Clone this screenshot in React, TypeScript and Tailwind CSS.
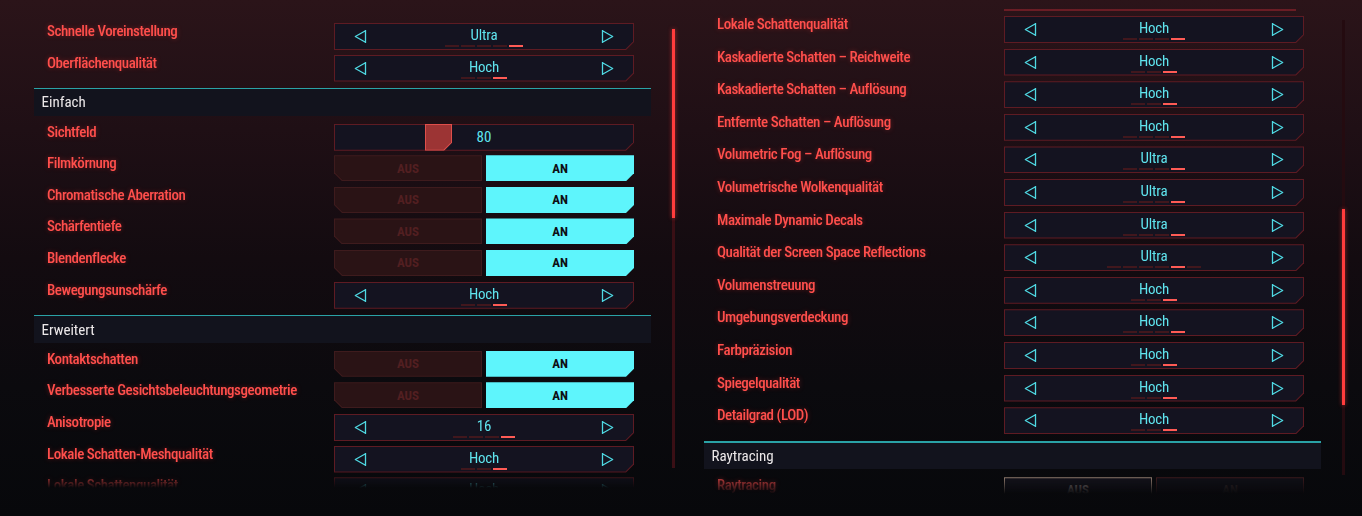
import React from "react";

/* ──────── Types ──────── */
type Control =
  | { kind: "select"; value: string; steps: number; active: number }
  | { kind: "toggle"; on: boolean; disabled?: boolean }
  | { kind: "slider"; value: number; min: number; max: number };

type Item =
  | { type: "row"; label: string; control: Control; dim?: boolean }
  | { type: "header"; title: string };

const sel = (value: string, steps: number, active = steps - 1): Control => ({
  kind: "select",
  value,
  steps,
  active,
});
const AN: Control = { kind: "toggle", on: true };

const leftItems: Item[] = [
  { type: "row", label: "Schnelle Voreinstellung", control: sel("Ultra", 5) },
  { type: "row", label: "Oberflächenqualität", control: sel("Hoch", 3) },
  { type: "header", title: "Einfach" },
  { type: "row", label: "Sichtfeld", control: { kind: "slider", value: 80, min: 70, max: 100 } },
  { type: "row", label: "Filmkörnung", control: AN },
  { type: "row", label: "Chromatische Aberration", control: AN },
  { type: "row", label: "Schärfentiefe", control: AN },
  { type: "row", label: "Blendenflecke", control: AN },
  { type: "row", label: "Bewegungsunschärfe", control: sel("Hoch", 3) },
  { type: "header", title: "Erweitert" },
  { type: "row", label: "Kontaktschatten", control: AN },
  { type: "row", label: "Verbesserte Gesichtsbeleuchtungsgeometrie", control: AN },
  { type: "row", label: "Anisotropie", control: sel("16", 4) },
  { type: "row", label: "Lokale Schatten-Meshqualität", control: sel("Hoch", 3) },
  { type: "row", label: "Lokale Schattenqualität", control: sel("Hoch", 4) },
];

const rightItems: Item[] = [
  { type: "row", label: "Lokale Schattenqualität", control: sel("Hoch", 4) },
  { type: "row", label: "Kaskadierte Schatten – Reichweite", control: sel("Hoch", 3) },
  { type: "row", label: "Kaskadierte Schatten – Auflösung", control: sel("Hoch", 3) },
  { type: "row", label: "Entfernte Schatten – Auflösung", control: sel("Hoch", 4) },
  { type: "row", label: "Volumetric Fog – Auflösung", control: sel("Ultra", 4) },
  { type: "row", label: "Volumetrische Wolkenqualität", control: sel("Ultra", 4) },
  { type: "row", label: "Maximale Dynamic Decals", control: sel("Ultra", 4) },
  { type: "row", label: "Qualität der Screen Space Reflections", control: sel("Ultra", 6, 4) },
  { type: "row", label: "Volumenstreuung", control: sel("Hoch", 3) },
  { type: "row", label: "Umgebungsverdeckung", control: sel("Hoch", 4) },
  { type: "row", label: "Farbpräzision", control: sel("Hoch", 3) },
  { type: "row", label: "Spiegelqualität", control: sel("Hoch", 3) },
  { type: "row", label: "Detailgrad (LOD)", control: sel("Hoch", 3) },
  { type: "header", title: "Raytracing" },
  { type: "row", label: "Raytracing", control: { kind: "toggle", on: false, disabled: true }, dim: true },
];

/* chamfered corners */
const clipBR = "[clip-path:polygon(0_0,100%_0,100%_calc(100%_-_8px),calc(100%_-_8px)_100%,0_100%)]";
const clipBRi = "[clip-path:polygon(0_0,100%_0,100%_calc(100%_-_7.5px),calc(100%_-_7.5px)_100%,0_100%)]";
const clipBL = "[clip-path:polygon(0_0,100%_0,100%_100%,8px_100%,0_calc(100%_-_8px))]";
const clipBLi = "[clip-path:polygon(0_0,100%_0,100%_100%,7.5px_100%,0_calc(100%_-_7.5px))]";

function Arrow({ dir }: { dir: "left" | "right" }) {
  const d =
    dir === "left"
      ? "M11.5 1 V14 M11.5 1.8 L1.3 7.5 L11.5 13.2"
      : "M1.5 1 V14 M1.5 1.8 L11.7 7.5 L1.5 13.2";
  return (
    <svg width="13" height="15" viewBox="0 0 13 15" fill="none" className="shrink-0">
      <path d={d} stroke="#4fd9e3" strokeWidth="1.3" strokeLinejoin="round" />
    </svg>
  );
}

function Select({ value, steps, active }: { value: string; steps: number; active: number }) {
  return (
    <div className={`h-[27px] w-[300px] shrink-0 bg-[#5e1b23] p-px ${clipBR}`}>
      <div className={`flex h-full items-center justify-between bg-[#141320] px-[19px] ${clipBRi}`}>
        <Arrow dir="left" />
        <div className="flex flex-col items-center">
          <span className="text-[15px] leading-[18px] tracking-[-0.2px] text-[#5fe4ee]">{value}</span>
          <div className="mt-px flex gap-[2px]">
            {Array.from({ length: steps }).map((_, i) => (
              <span
                key={i}
                className={`h-[2px] w-[14px] ${i === active ? "bg-[#ff5b55]" : "bg-[#41171d]"}`}
              />
            ))}
          </div>
        </div>
        <Arrow dir="right" />
      </div>
    </div>
  );
}

function Slider({ value, min, max }: { value: number; min: number; max: number }) {
  const left = ((value - min) / (max - min)) * (300 - 27);
  return (
    <div className={`relative h-[27px] w-[300px] shrink-0 bg-[#5e1b23] p-px ${clipBR}`}>
      <div className={`flex h-full items-center justify-center bg-[#141320] ${clipBRi}`}>
        <span className="text-[15px] leading-[18px] text-[#5fe4ee]">{value}</span>
      </div>
      <div className={`absolute top-0 h-full w-[27px] bg-[#de4f4b] p-px ${clipBR}`} style={{ left }}>
        <div className={`h-full bg-[#9c3434] ${clipBRi}`} />
      </div>
    </div>
  );
}

function Toggle({ on, disabled }: { on: boolean; disabled?: boolean }) {
  if (disabled) {
    return (
      <div className="flex h-[26px] w-[300px] shrink-0 gap-[4px] text-[13px] font-bold">
        <div className={`h-full w-[148px] bg-[#8a766a] p-px ${clipBL}`}>
          <div className={`flex h-full items-center justify-center bg-[#13121a] text-[#6e6464] ${clipBLi}`}>
            AUS
          </div>
        </div>
        <div className={`h-full w-[148px] bg-[#3a1a1d] p-px ${clipBR}`}>
          <div className={`flex h-full items-center justify-center bg-[#100f16] text-[#2e2426] ${clipBRi}`}>
            AN
          </div>
        </div>
      </div>
    );
  }
  return (
    <div className="flex h-[26px] w-[300px] shrink-0 gap-[4px] text-[13px] font-bold">
      <div className={`h-full w-[148px] bg-[#3e1b1d] p-px ${clipBL}`}>
        <div className={`flex h-full items-center justify-center bg-[#2a1315] text-[#521f21] ${clipBLi}`}>
          AUS
        </div>
      </div>
      <div
        className={`flex h-full w-[148px] items-center justify-center ${
          on ? "bg-[#5ef5fc] text-[#0e0e14]" : "bg-[#2a1315] text-[#4f1e20]"
        } ${clipBR}`}
      >
        AN
      </div>
    </div>
  );
}

function ControlView({ c }: { c: Control }) {
  if (c.kind === "select") return <Select value={c.value} steps={c.steps} active={c.active} />;
  if (c.kind === "slider") return <Slider value={c.value} min={c.min} max={c.max} />;
  return <Toggle on={c.on} disabled={c.disabled} />;
}

function Column({ items, rowH }: { items: Item[]; rowH: "left" | "right" }) {
  return (
    <>
      {items.map((it, i) =>
        it.type === "header" ? (
          <div key={i} className="mb-[8px] mt-[1.5px] flex h-[28px] flex-col bg-[#12131d]">
            <div className="h-[1.5px] bg-[#2aa2a6]" />
            <div className="flex flex-1 items-center pl-[7.5px] text-[15px] leading-[18px] text-[#ece8e9]">
              {it.title}
            </div>
          </div>
        ) : (
          <div
            key={i}
            className={`flex items-start ${rowH === "left" ? "h-[31.6px]" : "h-[32.6px]"}`}
          >
            <div
              className={`-mt-[1px] w-[300px] shrink-0 pl-[13px] text-[15px] font-medium leading-[18px] tracking-[-0.45px] [text-shadow:0_0_5px_rgba(255,60,60,0.35)] ${
                it.dim ? "text-[#b53a3a]" : "text-[#ff4f4c]"
              }`}
            >
              {it.label}
            </div>
            <ControlView c={it.control} />
          </div>
        )
      )}
    </>
  );
}

export default function App() {
  return (
    <div className="relative flex h-[516px] w-[1362px] overflow-hidden bg-[linear-gradient(180deg,#2b1419_0%,#1f0f15_25%,#130b10_50%,#0b0a0e_75%,#07080b_100%)] pl-[34px] [font-family:'Liberation_Sans_Narrow','Roboto_Condensed',Roboto,sans-serif]">
      {/* left settings list */}
      <div className="h-[488px] w-[617px] shrink-0 overflow-hidden pt-[23px] [mask-image:linear-gradient(to_bottom,#000_calc(100%_-_18px),transparent)]">
        <Column items={leftItems} rowH="left" />
      </div>

      <div className="ml-[21px] mt-[29px] h-[439px] w-[3px] shrink-0 bg-[#3a0f15]">
        <div className="h-[189px] bg-[#ff3c3c] shadow-[0_0_4px_rgba(255,60,60,0.6)]" />
      </div>

      {/* right settings list */}
      <div className="ml-[29px] h-[494px] w-[617px] shrink-0 overflow-hidden pt-[9px] [mask-image:linear-gradient(to_bottom,#000_calc(100%_-_16px),transparent)]">
        {/* bottom edge of the row scrolled out of view */}
        <div className="ml-[300px] h-[1.5px] w-[292px] bg-[#6a1d25]" />
        <div className="mt-[5.5px]">
          <Column items={rightItems} rowH="right" />
        </div>
      </div>

      <div className="ml-[21px] mt-[20px] h-[455px] w-[3px] shrink-0 bg-[#240b10]">
        <div className="mt-[189px] h-[196px] bg-[#ff3c3c] shadow-[0_0_4px_rgba(255,60,60,0.6)]" />
      </div>
    </div>
  );
}
